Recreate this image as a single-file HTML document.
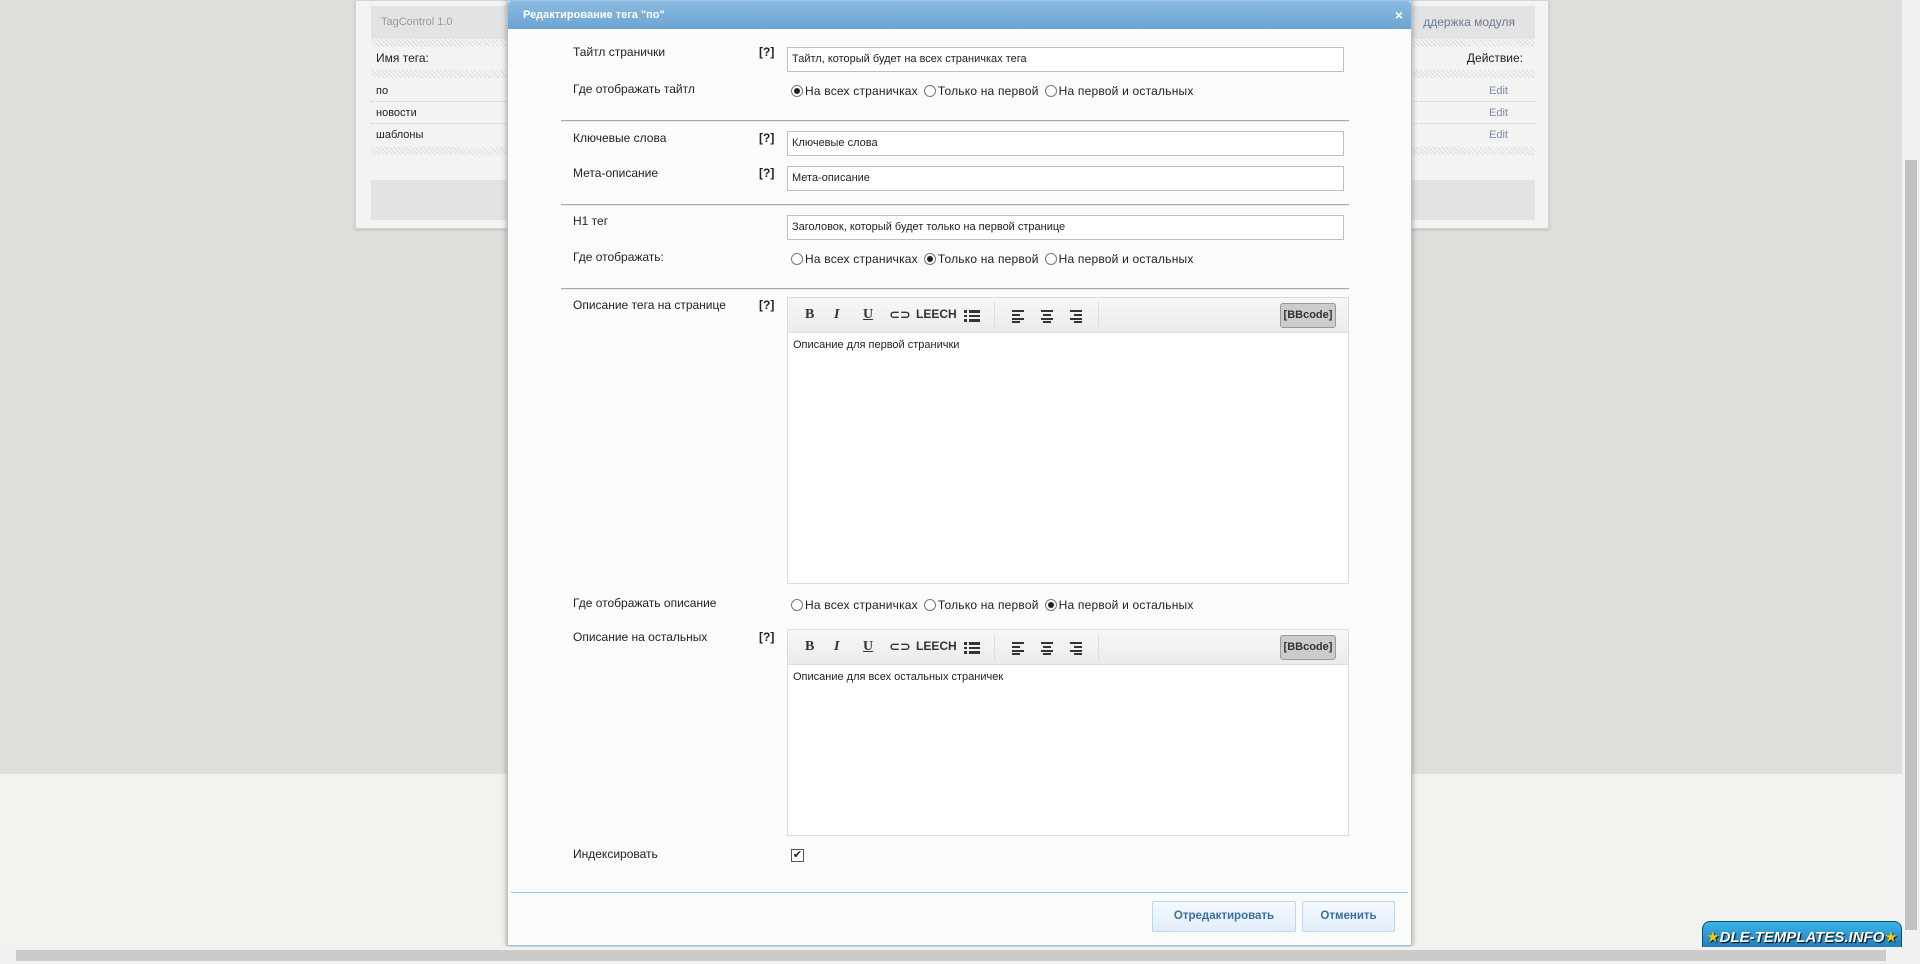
<!DOCTYPE html>
<html><head><meta charset="utf-8"><style>
*{box-sizing:border-box;margin:0;padding:0}
body{width:1920px;height:964px;overflow:hidden;position:relative;background:#dfdedb;font-family:"Liberation Sans","DejaVu Sans",sans-serif;font-size:12px;color:#222}
.abs{position:absolute}
.low{left:0;top:774px;width:1902px;height:173px;background:#f3f2ee}
.vs{left:1902px;top:0;width:18px;height:947px;background:#f1f1f1}
.vs .th{position:absolute;left:3px;top:160px;width:12px;height:770px;background:#c1c1c1}
.hs{left:0;top:947px;width:1920px;height:17px;background:#f1f1f1}
.hs .th{position:absolute;left:16px;top:3px;width:1870px;height:11px;background:#cbcbcb}
.panel{left:355px;top:0;width:1194px;height:229px;background:#f3f3f3;border:1px solid #d5d5d5;box-shadow:0 1px 3px #bbb}
.hatch{height:8px;background:repeating-linear-gradient(45deg,#ddd 0 1px,#f4f4f4 1px 3px)}
.dlg{left:507px;top:0;width:905px;height:946px;background:#fafcfb;border:1px solid #9fc6e2;box-shadow:0 0 6px rgba(0,0,0,.35)}
.hdr{height:28px;background:linear-gradient(#8bbbe0,#6ba4d2);color:#fff;font-weight:bold;font-size:11px;line-height:28px;padding-left:15px;border-radius:3px 3px 0 0}
.lbl{position:absolute;left:65px;font-size:12px}
.q{position:absolute;left:251px;font-weight:bold;font-size:12px}
.inp{position:absolute;left:279px;width:557px;height:25px;background:#fff;border:1px solid #bfbfbf;font-size:11px;line-height:23px;padding-left:4px}
.rad{position:absolute;left:283px;font-size:12px;display:flex;align-items:center}
.rad i{display:inline-block;width:12px;height:12px;border:1px solid #777;border-radius:50%;background:#fff;margin:0 2px 0 0;position:relative}
.rad i.on:after{content:"";position:absolute;left:2px;top:2px;width:6px;height:6px;border-radius:50%;background:#222}
.rad span{margin-right:6px;letter-spacing:.2px}
.hr{position:absolute;left:53px;width:788px;height:2px;background:#aaa;border-bottom:1px solid #e8e8e8}
.ed{position:absolute;left:279px;width:562px;border:1px solid #dcdcdc;background:#fff}
.tb{height:35px;background:linear-gradient(#f7f7f7,#ebebeb);border-bottom:1px solid #ddd;position:relative;font-size:14px;font-weight:bold;color:#333}
.tb b{position:absolute;top:9px}
.tb svg{position:absolute;top:11px}
.bb{position:absolute;right:12px;top:5px;width:56px;height:25px;background:#ccc;border:1px solid #999;border-radius:3px;font-size:11px;line-height:23px;text-align:center}
.txt{padding:6px 5px;font-size:11px}
.btn{position:absolute;top:901px;height:31px;border:1px solid #bcd7ee;background:linear-gradient(#f4f9fe,#e3eefa);color:#3a6f9e;font-weight:bold;font-size:11.5px;line-height:29px;text-align:center;border-radius:2px}
</style></head><body>
<div class="abs low"></div>
<div class="abs panel">
 <div style="position:absolute;left:15px;top:5px;width:1164px;height:33px;background:#e3e3e3;color:#999;font-size:11px;line-height:33px;padding-left:10px">TagControl 1.0<span style="position:absolute;right:20px;color:#6a7a95;font-size:12px">ддержка модуля</span></div>
 <div class="hatch" style="position:absolute;left:15px;top:38px;width:1164px"></div>
 <div style="position:absolute;left:20px;top:50px;font-size:12px">Имя тега:</div>
 <div style="position:absolute;right:25px;top:50px;font-size:12px">Действие:</div>
 <div class="hatch" style="position:absolute;left:15px;top:69px;width:1164px"></div>
 <div style="position:absolute;left:20px;top:84px;font-size:11px">по</div><div style="position:absolute;right:40px;top:84px;font-size:11px;color:#7b8bab">Edit</div>
 <div style="position:absolute;left:15px;top:100px;width:1164px;border-top:1px dotted #ccc"></div>
 <div style="position:absolute;left:20px;top:106px;font-size:11px">новости</div><div style="position:absolute;right:40px;top:106px;font-size:11px;color:#7b8bab">Edit</div>
 <div style="position:absolute;left:15px;top:122px;width:1164px;border-top:1px dotted #ccc"></div>
 <div style="position:absolute;left:20px;top:128px;font-size:11px">шаблоны</div><div style="position:absolute;right:40px;top:128px;font-size:11px;color:#7b8bab">Edit</div>
 <div class="hatch" style="position:absolute;left:15px;top:146px;width:1164px"></div>
 <div style="position:absolute;left:15px;top:179px;width:1164px;height:40px;background:#e3e3e3"></div>
</div>
<div class="abs dlg">
 <div class="hdr">Редактирование тега "по"<span style="position:absolute;right:8px;top:0;font-size:14px">×</span></div>
 <div class="lbl" style="top:44px">Тайтл странички</div><div class="q" style="top:44px">[?]</div>
 <div class="inp" style="top:46px">Тайтл, который будет на всех страничках тега</div>
 <div class="lbl" style="top:81px">Где отображать тайтл</div>
 <div class="rad" style="top:83px"><i class="on"></i><span>На всех страничках</span><i></i><span>Только на первой</span><i></i><span>На первой и остальных</span></div>
 <div class="hr" style="top:119px"></div>
 <div class="lbl" style="top:130px">Ключевые слова</div><div class="q" style="top:130px">[?]</div>
 <div class="inp" style="top:130px">Ключевые слова</div>
 <div class="lbl" style="top:165px">Мета-описание</div><div class="q" style="top:165px">[?]</div>
 <div class="inp" style="top:165px">Мета-описание</div>
 <div class="hr" style="top:203px"></div>
 <div class="lbl" style="top:213px">H1 тег</div>
 <div class="inp" style="top:214px">Заголовок, который будет только на первой странице</div>
 <div class="lbl" style="top:249px">Где отображать:</div>
 <div class="rad" style="top:251px"><i></i><span>На всех страничках</span><i class="on"></i><span>Только на первой</span><i></i><span>На первой и остальных</span></div>
 <div class="hr" style="top:287px"></div>
 <div class="lbl" style="top:297px">Описание тега на странице</div><div class="q" style="top:297px">[?]</div>
 <div class="ed" style="top:296px;height:287px">
  <div class="tb"><b style="left:17px;font-family:'Liberation Serif',serif">B</b><b style="left:46px;font-family:'Liberation Serif',serif;font-style:italic">I</b><b style="left:75px;text-decoration:underline;font-family:'Liberation Serif',serif">U</b><b style="left:101px;font-size:13px">⊂⊃</b><b style="left:128px;font-size:12px">LEECH</b><svg style="left:176px" width="16" height="14"><path d="M0 1h3v3H0zM5 1h11v3H5zM0 6h3v2H0zM5 6h11v2H5zM0 10h3v3H0zM5 10h11v3H5z" fill="#333"/></svg><span style="position:absolute;left:206px;top:4px;height:27px;border-left:1px solid #ddd"></span><svg style="left:224px" width="12" height="14"><path d="M0 1h12v2H0zM0 5h8v2H0zM0 9h12v2H0zM0 12h8v2H0z" fill="#333"/></svg><svg style="left:253px" width="12" height="14"><path d="M0 1h12v2H0zM2 5h8v2H2zM0 9h12v2H0zM2 12h8v2H2z" fill="#333"/></svg><svg style="left:282px" width="12" height="14"><path d="M0 1h12v2H0zM4 5h8v2H4zM0 9h12v2H0zM4 12h8v2H4z" fill="#333"/></svg><span style="position:absolute;left:310px;top:4px;height:27px;border-left:1px solid #ddd"></span><div class="bb">[BBcode]</div></div>
  <div class="txt">Описание для первой странички</div>
 </div>
 <div class="lbl" style="top:595px">Где отображать описание</div>
 <div class="rad" style="top:597px"><i></i><span>На всех страничках</span><i></i><span>Только на первой</span><i class="on"></i><span>На первой и остальных</span></div>
 <div class="lbl" style="top:629px">Описание на остальных</div><div class="q" style="top:629px">[?]</div>
 <div class="ed" style="top:628px;height:207px">
  <div class="tb"><b style="left:17px;font-family:'Liberation Serif',serif">B</b><b style="left:46px;font-family:'Liberation Serif',serif;font-style:italic">I</b><b style="left:75px;text-decoration:underline;font-family:'Liberation Serif',serif">U</b><b style="left:101px;font-size:13px">⊂⊃</b><b style="left:128px;font-size:12px">LEECH</b><svg style="left:176px" width="16" height="14"><path d="M0 1h3v3H0zM5 1h11v3H5zM0 6h3v2H0zM5 6h11v2H5zM0 10h3v3H0zM5 10h11v3H5z" fill="#333"/></svg><span style="position:absolute;left:206px;top:4px;height:27px;border-left:1px solid #ddd"></span><svg style="left:224px" width="12" height="14"><path d="M0 1h12v2H0zM0 5h8v2H0zM0 9h12v2H0zM0 12h8v2H0z" fill="#333"/></svg><svg style="left:253px" width="12" height="14"><path d="M0 1h12v2H0zM2 5h8v2H2zM0 9h12v2H0zM2 12h8v2H2z" fill="#333"/></svg><svg style="left:282px" width="12" height="14"><path d="M0 1h12v2H0zM4 5h8v2H4zM0 9h12v2H0zM4 12h8v2H4z" fill="#333"/></svg><span style="position:absolute;left:310px;top:4px;height:27px;border-left:1px solid #ddd"></span><div class="bb">[BBcode]</div></div>
  <div class="txt">Описание для всех остальных страничек</div>
 </div>
 <div class="lbl" style="top:846px">Индексировать</div>
 <div style="position:absolute;left:283px;top:848px;width:13px;height:13px;border:1px solid #555;background:#fff;font-size:11px;line-height:11px;text-align:center">✔</div>
 <div style="position:absolute;left:3px;top:891px;width:897px;height:1px;background:#9fc6e2"></div>
</div>
<div class="btn" style="left:1152px;width:144px">Отредактировать</div>
<div class="btn" style="left:1302px;width:93px">Отменить</div>
<div class="abs" style="left:1702px;top:921px;width:200px;height:34px;border-radius:8px;background:linear-gradient(#3bb5e8,#1a6fae);border:1px solid #104a75;color:#fff;font-weight:bold;font-style:italic;font-size:15px;line-height:32px;text-align:center;text-shadow:1px 1px 1px #000"><span style="color:#f5c518">★</span>DLE-TEMPLATES.INFO<span style="color:#f5c518">★</span></div>
<div class="abs vs"><div class="th"></div></div>
<div class="abs hs"><div class="th"></div></div>
</body></html>
